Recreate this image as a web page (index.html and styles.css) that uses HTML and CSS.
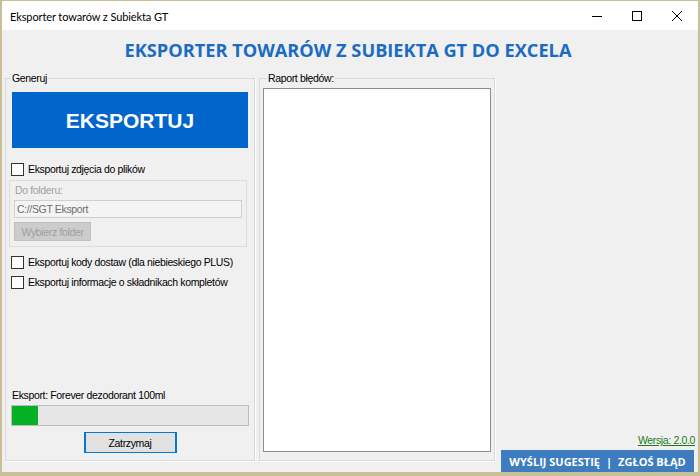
FILE: index.html
```html
<!DOCTYPE html>
<html lang="pl">
<head>
    <meta charset="UTF-8">
    <title>Eksporter towarów z Subiekta GT</title>
    <link rel="stylesheet" href="styles.css">
</head>
<body>
<div class="window">
    <!-- pasek tytułu -->
    <div class="titlebar">
        <span class="title">Eksporter towarów z Subiekta GT</span>
        <div class="caption-buttons">
            <span class="cap-btn">
                <svg width="10" height="10" viewBox="0 0 10 10"><path d="M0 5.5h10" stroke="#000" stroke-width="1"/></svg>
            </span>
            <span class="cap-btn">
                <svg width="10" height="10" viewBox="0 0 10 10"><rect x="0.5" y="0.5" width="9" height="9" fill="none" stroke="#000" stroke-width="1"/></svg>
            </span>
            <span class="cap-btn">
                <svg width="10" height="10" viewBox="0 0 10 10"><path d="M0 0L10 10M10 0L0 10" stroke="#000" stroke-width="1"/></svg>
            </span>
        </div>
    </div>

    <div class="content">
        <h1 class="heading">EKSPORTER TOWARÓW Z SUBIEKTA GT DO EXCELA</h1>

        <div class="main">
            <fieldset class="group group-left">
                <legend>Generuj</legend>
                <button class="export-button">EKSPORTUJ</button>

                <label class="check check-first"><span class="box"></span>Eksportuj zdjęcia do plików</label>

                <div class="folder-panel">
                    <div class="folder-label">Do folderu:</div>
                    <div class="folder-input">C://SGT Eksport</div>
                    <button class="folder-button" disabled>Wybierz folder</button>
                </div>

                <label class="check check-second"><span class="box"></span>Eksportuj kody dostaw (dla niebieskiego PLUS)</label>
                <label class="check check-third"><span class="box"></span>Eksportuj informacje o składnikach kompletów</label>

                <div class="spacer"></div>

                <div class="status">Eksport: Forever dezodorant 100ml</div>
                <div class="progress"><div class="progress-fill" style="width: 11%"></div></div>
                <button class="stop-button">Zatrzymaj</button>
            </fieldset>

            <fieldset class="group group-right">
                <legend>Raport błędów:</legend>
                <div class="report"></div>
            </fieldset>

            <div class="side">
                <a class="version" href="#">Wersja: 2.0.0</a>
                <div class="feedback">
                    <span>WYŚLIJ SUGESTIĘ</span>
                    <span class="sep">|</span>
                    <span>ZGŁOŚ BŁĄD</span>
                </div>
            </div>
        </div>
    </div>
</div>
</body>
</html>
```

FILE: styles.css
```css
/* okno */
html, body {
    margin: 0;
    padding: 0;
}
body {
    font-family: "Liberation Sans", Arial, sans-serif;
    font-size: 10.5px;
    letter-spacing: -0.35px;
    color: #000;
    background: #f0f0f0;
}
.window {
    width: 700px;
    height: 476px;
    box-sizing: border-box;
    border: 2px solid #c8bf96;
    border-top-width: 1px;
    border-bottom-width: 4px;
    background: #f0f0f0;
    display: flex;
    flex-direction: column;
}

/* pasek tytułu */
.titlebar {
    height: 29px;
    flex: none;
    background: #fff;
    display: flex;
    align-items: center;
    justify-content: space-between;
}
.title {
    font-family: Lato, "Open Sans", sans-serif;
    font-size: 11px;
    letter-spacing: -0.1px;
    padding-left: 8px;
    padding-top: 1px;
}
.caption-buttons {
    display: flex;
    height: 100%;
    margin-right: 1px;
}
.cap-btn {
    width: 40px;
    display: flex;
    align-items: center;
    justify-content: center;
}

/* zawartość */
.content {
    flex: 1;
    display: flex;
    flex-direction: column;
}
.heading {
    margin: 0;
    height: 42px;
    line-height: 40px;
    text-align: center;
    font-family: "Open Sans", "Noto Sans", sans-serif;
    font-size: 18.2px;
    font-weight: bold;
    letter-spacing: 0;
    color: #1c6bc2;
    padding-right: 4px;
}
.main {
    flex: 1;
    display: flex;
    padding-left: 3px;
}

/* group box */
.group {
    margin: 0 0 11px 0;
    padding: 0 6px 7px 6px;
    border: 1px solid #d9d9d9;
    box-shadow: 1px 1px 0 #fff;
    display: flex;
    flex-direction: column;
    min-width: 0;
}
.group legend {
    line-height: 13px;
    padding: 0 1px;
}
.group-left {
    width: 250px;
    box-sizing: border-box;
}
.group-left legend {
    margin-left: -1px;
}
.group-right {
    width: 236px;
    box-sizing: border-box;
    margin-left: 4px;
    padding: 0 3px 8px 3px;
}
.group-right legend {
    margin-left: 4px;
}

.export-button {
    margin-top: 7px;
    height: 56px;
    border: none;
    background: #0066cc;
    color: #fff;
    font-family: "Liberation Sans", Arial, sans-serif;
    font-size: 21px;
    font-weight: bold;
    letter-spacing: 0;
    padding: 1px 0 0 0;
}

/* checkboxy */
.check {
    display: flex;
    align-items: center;
    height: 13px;
    line-height: 13px;
    margin-left: -1px;
    white-space: nowrap;
}
.check .box {
    width: 13px;
    height: 13px;
    box-sizing: border-box;
    border: 1px solid #333;
    background: #fff;
    margin-right: 4px;
    flex: none;
}
.check-first { margin-top: 15px; }
.check-second { margin-top: 9px; }
.check-third { margin-top: 7px; }

/* folder */
.folder-panel {
    margin: 4px 1px 0 -3px;
    padding: 3px 4px 5px 4px;
    border: 1px solid #dcdcdc;
    display: flex;
    flex-direction: column;
    align-items: flex-start;
}
.folder-label {
    color: #a0a0a0;
    line-height: 13px;
    padding-left: 1px;
}
.folder-input {
    margin-top: 3px;
    width: 100%;
    height: 18px;
    box-sizing: border-box;
    border: 1px solid #d0d0d0;
    background: #f4f4f4;
    color: #6d6d6d;
    line-height: 16px;
    padding-left: 2px;
}
.folder-button {
    margin-top: 4px;
    width: 77px;
    height: 19px;
    border: 1px solid #bfbfbf;
    background: #cccccc;
    color: #a0a0a0;
    font-family: inherit;
    font-size: inherit;
    letter-spacing: inherit;
    padding: 0;
}

.spacer {
    flex: 1;
}

/* postęp */
.status {
    line-height: 13px;
}
.progress {
    margin: 3px -1px 0 -1px;
    height: 21px;
    box-sizing: border-box;
    border: 1px solid #bcbcbc;
    background: #e6e6e6;
}
.progress-fill {
    height: 100%;
    background: #06b025;
}
.stop-button {
    margin-top: 6px;
    align-self: center;
    width: 93px;
    height: 21px;
    border: 1px solid #0078d7;
    box-shadow: inset 1px 0 #0078d7, inset -1px 0 #0078d7;
    background: #e1e1e1;
    font-family: inherit;
    font-size: inherit;
    letter-spacing: inherit;
    padding: 0;
}

/* raport */
.report {
    flex: 1;
    margin-top: 3px;
    border: 1px solid #8d8d8d;
    background: #fff;
}

/* prawa kolumna */
.side {
    flex: 1;
    display: flex;
    flex-direction: column;
    justify-content: flex-end;
    align-items: flex-end;
}
.version {
    color: #1d7a1d;
    text-decoration: underline;
    line-height: 13px;
    margin-right: 3px;
    margin-bottom: 3px;
}
.feedback {
    width: 193px;
    height: 22px;
    margin-right: 4px;
    background: #3d7dbf;
    color: #fff;
    font-family: "Open Sans", "Noto Sans", sans-serif;
    font-size: 11px;
    font-weight: bold;
    letter-spacing: 0;
    display: flex;
    align-items: center;
    justify-content: center;
    padding-top: 1px;
    box-sizing: border-box;
}
.feedback .sep {
    margin: 0 6px;
}
```
